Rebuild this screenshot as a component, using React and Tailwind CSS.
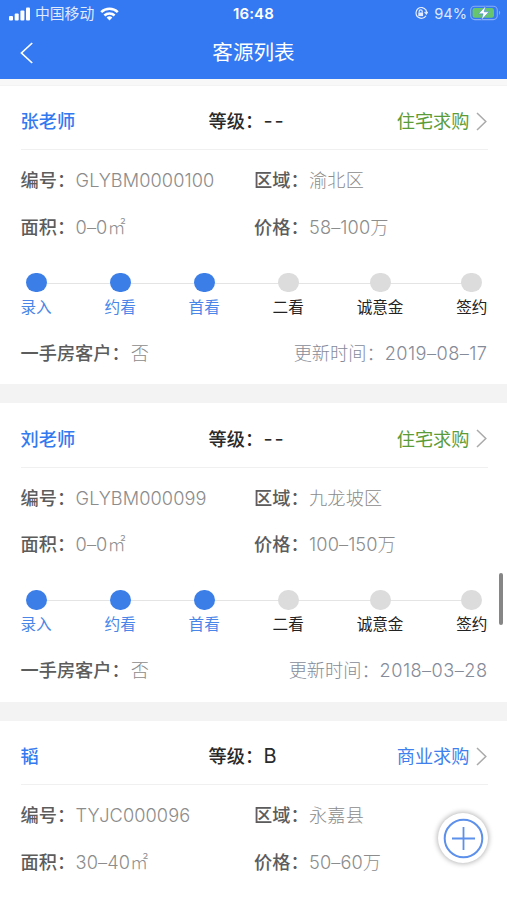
import React from "react";

const CUSTOMERS = [
  { name: "张老师", level: "--", kind: "住宅求购", kindColor: "text-[#5c9c38]", code: "GLYBM0000100", area: "渝北区", size: "0–0㎡", price: "58–100万", updated: "2019–08–17" },
  { name: "刘老师", level: "--", kind: "住宅求购", kindColor: "text-[#5c9c38]", code: "GLYBM000099", area: "九龙坡区", size: "0–0㎡", price: "100–150万", updated: "2018–03–28" },
  { name: "韬", level: "B", kind: "商业求购", kindColor: "text-[#3f7fee]", code: "TYJC000096", area: "永嘉县", size: "30–40㎡", price: "50–60万" },
];

const STEPS = ["录入", "约看", "首看", "二看", "诚意金", "签约"];
const DONE = 3;

function StatusBar() {
  return (
    <div className="relative flex h-[27px] items-center justify-between pl-[9px] pr-[6px] text-[14.5px] text-white">
      <div className="flex items-center">
        <svg width="22" height="14" viewBox="0 0 22 14" fill="currentColor">
          <rect x="0" y="9" width="4" height="4.5" rx="1" />
          <rect x="5.7" y="6.5" width="4" height="7" rx="1" />
          <rect x="11.4" y="3.5" width="4" height="10" rx="1" />
          <rect x="17" y="0.5" width="4" height="13" rx="1" />
        </svg>
        <span className="ml-[4px] pt-[2px] text-[14.8px] text-[#e0eaff]">中国移动</span>
        <svg className="ml-[6px]" width="19" height="14" viewBox="0 0 19 14" fill="none" stroke="currentColor" strokeWidth="2.5">
          <path d="M1.2 5.2a11.8 11.8 0 0 1 16.6 0" />
          <path d="M4.4 8.5a7.2 7.2 0 0 1 10.2 0" />
          <path d="M9.5 13.5L6.6 10.6a4.1 4.1 0 0 1 5.8 0z" fill="currentColor" stroke="none" />
        </svg>
      </div>
      <span className="absolute left-1/2 top-[3px] -translate-x-1/2 text-[15px] font-semibold tracking-[0.1px]">16:48</span>
      <div className="flex items-center">
        <svg width="14" height="14" viewBox="0 0 14 14" fill="none" stroke="#e4edff" strokeWidth="1.2">
          <path d="M12 4.1A5.4 5.4 0 1 0 12 9.7M12 4.1a5.4 5.4 0 0 1 .4 3.2" />
          <path d="M10.6 6l1.8 2 1.3-2.2" />
          <rect x="4.3" y="6.5" width="4.8" height="3.6" fill="#e4edff" stroke="none" />
          <path d="M5.2 6.5V5.3a1.5 1.5 0 0 1 3 0v1.2" />
        </svg>
        <span className="ml-[6px] pt-[2px] text-[14.6px] text-[#dce8ff]">94%</span>
        <svg className="ml-[3px]" width="31" height="16" viewBox="0 0 31 16">
          <rect x="0.7" y="1.2" width="26.6" height="13.4" rx="4" fill="none" stroke="#86adf5" strokeWidth="1.1" />
          <rect x="2.5" y="3" width="21.5" height="9.8" rx="2.2" fill="#67c56d" />
          <path d="M29 5.8c1.6.7 1.6 3.5 0 4.2z" fill="#86adf5" />
          <path d="M15.7 1L8.5 8.8h4.6L11.4 15l7.6-8.2h-4.8z" fill="#fff" stroke="#3b7aec" strokeWidth="0.5" />
        </svg>
      </div>
    </div>
  );
}

function Field({ label, value }) {
  return (
    <div className="flex h-[46.5px] items-center">
      <span className="font-medium text-[#5c5c5c]">{label}：</span>
      <span className="ml-[0.5px] font-light tracking-[0.08px] text-[#8c8c8c]">{value}</span>
    </div>
  );
}

function Progress() {
  return (
    <div className="relative mt-[23px] flex h-[47px] justify-between">
      <div className="absolute left-4 right-4 top-[10px] h-px bg-[#e4e4e4]" />
      {STEPS.map((step, i) => (
        <div key={step} className="relative flex flex-col items-center">
          <span className={i < DONE ? "size-[21px] rounded-full bg-[#3b7ee8]" : "size-[21px] rounded-full bg-[#dcdcdc]"} />
          <span className={i < DONE ? "mt-[3.5px] text-[15.6px] leading-[24px] text-[#4a86e8]" : "mt-[3.5px] text-[15.6px] leading-[24px] text-[#222]"}>
            {step}
          </span>
        </div>
      ))}
    </div>
  );
}

function Card({ c }) {
  return (
    <section className="h-[298.5px] shrink-0 bg-white pl-[20.5px] pr-[19.5px]">
      <div className="flex h-[64.5px] items-center border-b border-[#f0f0f0] pt-[7px]">
        <span className="w-[188px] font-medium text-[#3379f0]">{c.name}</span>
        <span className="flex-1 font-medium text-[#2a2a2a]">
          等级：<span className="ml-[0.5px] text-[20px] tracking-[1.8px] font-normal">{c.level}</span>
        </span>
        <span className={c.kindColor}>{c.kind}</span>
        <svg className="ml-[6px] mr-px" width="11" height="19" viewBox="0 0 11 19" fill="none" stroke="#aaa" strokeWidth="1.5">
          <path d="M1 1l8.8 8.5L1 18" />
        </svg>
      </div>
      <div className="grid grid-cols-2 pt-[6.5px]">
        <Field label="编号" value={c.code} />
        <Field label="区域" value={c.area} />
        <Field label="面积" value={c.size} />
        <Field label="价格" value={c.price} />
      </div>
      {c.updated && (
        <>
          <Progress />
          <div className="flex h-[66px] items-center justify-between">
            <div>
              <span className="font-medium text-[#5c5c5c]">一手房客户：</span>
              <span className="ml-px font-light text-[#8c8c8c]">否</span>
            </div>
            <span className="font-light text-[#858b99]">
              更新时间：<span className="tracking-[0.45px]">{c.updated}</span>
            </span>
          </div>
        </>
      )}
    </section>
  );
}

export default function App() {
  return (
    <div className="relative flex h-[900px] w-[507px] flex-col overflow-hidden bg-[#f3f3f3] font-['Inter','Noto_Sans_CJK_SC',sans-serif]">
      <header className="h-[79px] shrink-0 bg-[#3478f2]">
        <StatusBar />
        <div className="relative flex h-[50px] items-center justify-center">
          <svg className="absolute left-[20px] top-[15px]" width="14" height="22" viewBox="0 0 14 22" fill="none" stroke="#fff" strokeWidth="1.7">
            <path d="M12.2 1L1.5 11l10.7 10" />
          </svg>
          <h1 className="pt-[2px] text-[20.6px] font-normal text-white">客源列表</h1>
        </div>
      </header>
      <main className="flex flex-col gap-[19px] border-t-[6px] border-[#f8f8f8] pt-[0.9px] text-[18.2px] leading-[26px]">
        {CUSTOMERS.map((c) => (
          <Card key={c.name} c={c} />
        ))}
      </main>
      <div className="absolute left-[499px] top-[573px] h-[52px] w-[4px] rounded-full bg-[#868686]" />
      <button className="absolute left-[438px] top-[813px] flex size-[50px] items-center justify-center rounded-full bg-white shadow-[0_0_5px_1px_rgba(0,0,0,0.28)]">
        <svg width="41" height="41" viewBox="0 0 41 41" fill="none" stroke="#5c90ea">
          <circle cx="20.5" cy="20.5" r="18.8" strokeWidth="2" />
          <path d="M9 20.5h23M20.5 9v23" strokeWidth="1.8" />
        </svg>
      </button>
    </div>
  );
}
